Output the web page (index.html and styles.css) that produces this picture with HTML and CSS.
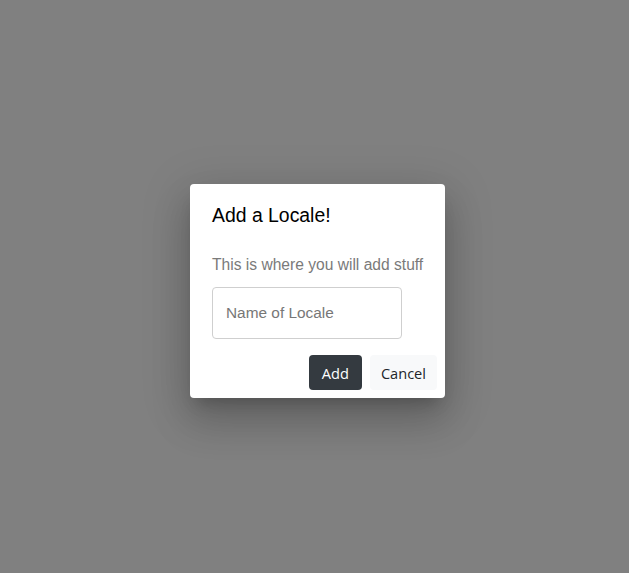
FILE: index.html
```html
<!DOCTYPE html>
<html lang="en">
<head>
<meta charset="utf-8">
<title>Add a Locale</title>
<link rel="stylesheet" href="styles.css">
</head>
<body>
<div class="backdrop">
  <div class="dialog" role="dialog" aria-labelledby="dlg-title">
    <h2 class="dialog-title" id="dlg-title">Add a Locale!</h2>
    <p class="dialog-text">This is where you will add stuff</p>
    <input class="dialog-input" type="text" placeholder="Name of Locale">
    <div class="dialog-actions">
      <button class="btn btn-dark" type="button">Add</button>
      <button class="btn btn-light" type="button">Cancel</button>
    </div>
  </div>
</div>
</body>
</html>
```
FILE: styles.css
```css
* { box-sizing: border-box; }
html, body { margin: 0; padding: 0; }
body {
  background: #808080;
  font-family: "Liberation Sans", Arial, sans-serif;
}
.backdrop {
  min-height: 100vh;
  display: flex;
  align-items: center;
  justify-content: center;
  padding: 9px 0 0 6px;
}
.dialog {
  width: 255px;
  background: #fff;
  border-radius: 4px;
  padding: 19px 8px 8px 22px;
  box-shadow: 0 11px 15px -7px rgba(0,0,0,0.2),
              0 24px 38px 3px rgba(0,0,0,0.14),
              0 9px 46px 8px rgba(0,0,0,0.12);
  display: flex;
  flex-direction: column;
}
.dialog-title {
  margin: 0;
  font-size: 19.4px;
  line-height: 24px;
  font-weight: 400;
  color: #000;
}
.dialog-text {
  margin: 28px 0 0;
  font-size: 15.6px;
  line-height: 20px;
  color: #7a7a7a;
  white-space: nowrap;
}
.dialog-input {
  margin-top: 12px;
  width: 190px;
  height: 52px;
  border: 1px solid #cfcfcf;
  border-radius: 4px;
  padding: 0 13px;
  font-family: "Liberation Sans", Arial, sans-serif;
  font-size: 15.4px;
  color: #333;
  outline: none;
}
.dialog-input::placeholder { color: #777; }
.dialog-actions {
  margin-top: 16px;
  display: flex;
  justify-content: flex-end;
  gap: 8px;
}
.btn {
  height: 35px;
  border: 0;
  border-radius: 4px;
  padding: 1px 11px 0;
  font-family: "Open Sans", "Noto Sans", sans-serif;
  font-size: 14.6px;
  line-height: 34px;
  cursor: pointer;
}
.btn-dark { background: #343a40; color: #fff; padding: 1px 13px 0; }
.btn-light { background: #f8f9fa; color: #212529; }
```
